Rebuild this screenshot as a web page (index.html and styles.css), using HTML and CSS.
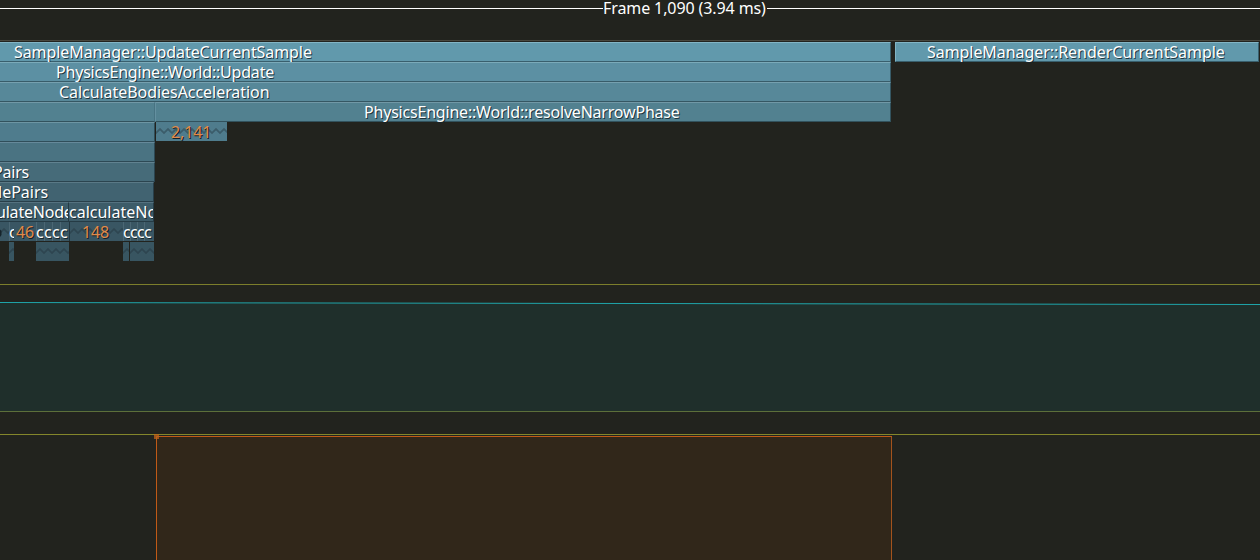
FILE: index.html
```html
<!DOCTYPE html>
<html lang="en">
<head>
<meta charset="utf-8">
<title>Frame timeline</title>
<link rel="stylesheet" href="styles.css">
</head>
<body>
<svg class="defs" aria-hidden="true">
  <defs>
    <pattern id="wave" width="8" height="19" patternUnits="userSpaceOnUse">
      <path d="M-2 9L0 11L4 7L8 11L10 9" fill="none" stroke="#20303a" stroke-opacity=".42" stroke-width="1.8"/>
    </pattern>
  </defs>
</svg>
<main class="timeline">
  <header class="frame"><i class="rule rule-left"></i><span class="frame-label">Frame 1,090 (3.94 ms)</span><i class="rule"></i></header>
  <section class="zones">
    <div class="row d1">
      <div class="zone root"><span class="t t-update">SampleManager::UpdateCurrentSample</span></div>
      <div class="zone render"><span class="t t-render">SampleManager::RenderCurrentSample</span></div>
    </div>
    <div class="row d2"><div class="zone root"><span class="t t-world">PhysicsEngine::World::Update</span></div></div>
    <div class="row d3"><div class="zone root"><span class="t t-bodies">CalculateBodiesAcceleration</span></div></div>
    <div class="row d4"><div class="zone left"></div><div class="zone narrow"><span class="t t-narrow">PhysicsEngine::World::resolveNarrowPhase</span></div></div>
    <div class="row d5"><div class="zone left"></div><div class="fold fold-a"><svg class="zig"><rect width="100%" height="19" fill="url(#wave)"/></svg><span class="count">2,141</span></div></div>
    <div class="row d6"><div class="zone left"></div></div>
    <div class="row d7"><div class="zone left"><span class="t t-pairs">Pairs</span></div></div>
    <div class="row d8"><div class="zone inner"><span class="t t-lepairs">lePairs</span></div></div>
    <div class="row d9"><div class="zone node-a"><span class="t t-node">ulateNode</span></div><div class="zone node-b"><span class="t t-calc">calculateNo</span></div></div>
    <div class="row d10">
      <div class="fold w9"><svg class="zig"><rect width="100%" height="19" fill="url(#wave)"/><path d="M0 7.5V15L1.5 13V9Z" fill="#16242b"/></svg></div>
      <div class="cell w5">c</div>
      <div class="fold w22"><span class="count c46">46</span></div>
      <div class="cell w8">c</div><div class="cell w8">c</div><div class="cell w8">c</div><div class="cell w9">c</div>
      <div class="fold w54"><svg class="zig"><rect width="100%" height="19" fill="url(#wave)"/></svg><span class="count c148">148</span></div>
      <div class="cell w7">c</div><div class="cell w7">c</div><div class="cell w7">c</div><div class="cell w10">c</div>
    </div>
    <div class="row d11">
      <div class="fold leaf-a"><svg class="zig"><rect width="100%" height="19" fill="url(#wave)"/></svg></div>
      <div class="fold leaf-b"><svg class="zig"><rect width="100%" height="19" fill="url(#wave)"/></svg></div>
      <div class="fold leaf-c"><svg class="zig"><rect width="100%" height="19" fill="url(#wave)"/></svg></div>
      <div class="fold leaf-d"><svg class="zig"><rect width="100%" height="19" fill="url(#wave)"/></svg></div>
    </div>
  </section>
  <svg class="plot" width="1260" height="128" viewBox="0 0 1260 128">
    <path d="M0 18.5L1260 20.5V127H0Z" fill="#1f2f2b"/>
    <path d="M0 18.5L1260 20.5" fill="none" stroke="#1fa5aa"/>
    <path d="M0 .5H1260" stroke="#7c7e2b"/>
    <path d="M0 127.5H1260" stroke="#5c6f3a"/>
  </svg>
  <svg class="plot calls" width="1260" height="126" viewBox="0 0 1260 126">
    <path d="M156 2H891V126H156Z" fill="#31271a"/>
    <path d="M0 .5H1260" stroke="#84862b"/>
    <path d="M156.5 126V2.5H892" fill="none" stroke="#c05a17"/>
    <path d="M891.5 3V126" stroke="#a3531d"/>
    <path d="M154 0H159V5H154Z" fill="#c0641b" fill-opacity=".75"/>
  </svg>
</main>
</body>
</html>
```
FILE: styles.css
```css
* { box-sizing: border-box; }
body { margin: 0; background: #22231e; overflow: hidden; font: 16px/20px "Noto Sans", sans-serif; color: #fff; }
.defs { display: block; width: 0; height: 0; }
.timeline { display: flex; flex-direction: column; width: 1260px; height: 560px; overflow: hidden; }
.frame { display: flex; height: 41px; border-bottom: 1px solid #48473e; }
.frame-label { width: 164px; line-height: 17px; white-space: nowrap; letter-spacing: -.1px; }
.rule { flex: 1; height: 1px; margin-top: 8px; background: #fff; }
.rule-left { flex: 0 0 603px; }
.zones { height: 243px; padding-top: 1px; }
.row { display: flex; height: 20px; }
.zone { height: 20px; white-space: nowrap; background: var(--c); border-top: 1px solid var(--hi); border-bottom: 1px solid var(--lo); border-right: 1px solid var(--lo); line-height: 18px; }
.t { display: block; width: max-content; height: 18px; text-shadow: 1px 1px 0 #15242bd9; letter-spacing: -.2px; }
.d1 { --c: #6199ac; --hi: #82b5c5; --lo: #395f6d; }
.d2 { --c: #5c90a3; --hi: #7baab9; --lo: #385c69; }
.d3 { --c: #578899; --hi: #76a0af; --lo: #355763; }
.d4 { --c: #528190; --hi: #7198a6; --lo: #32525d; }
.d5 { --c: #4f7c8d; --hi: #6d95a3; --lo: #304e5a; }
.d6 { --c: #4a7382; --hi: #66899a; --lo: #2d4955; }
.d7 { --c: #466b79; --hi: #618290; --lo: #2b444f; }
.d8 { --c: #416371; --hi: #5a7986; --lo: #283f4a; }
.d9 { --c: #3d5c69; --hi: #557280; --lo: #253b45; }
.d10 { --c: #395663; --hi: #4b6774; --lo: #23363f; }
.d11 { --c: #385561; }
.root { width: 891px; }
.render { width: 364px; margin-left: 4px; border-left: 1px solid var(--hi); }
.left { width: 155px; }
.narrow { width: 736px; border-left: 1px solid #6490a0; }
.d4 .left { border-right-color: #477382; }
.inner { width: 154px; }
.node-a { width: 69px; overflow: hidden; }
.node-b { width: 85px; overflow: hidden; }
.t-update { margin-left: 14px; letter-spacing: -.08px; }
.t-render { margin-left: 31px; letter-spacing: -.06px; }
.t-world { margin-left: 56px; }
.t-bodies { margin-left: 59px; letter-spacing: -.05px; }
.t-narrow { margin-left: 208px; }
.t-pairs { margin-left: -7px; }
.t-lepairs { margin-left: -2px; letter-spacing: 0; }
.t-node { margin-left: -4px; }
.t-calc { letter-spacing: 0; }
.fold { display: grid; height: 19px; background: var(--c); overflow: hidden; flex: none; }
.zig { grid-area: 1 / 1; display: block; width: 100%; height: 19px; }
.count { grid-area: 1 / 1; color: #e08a4a; text-shadow: 1px 1px 0 #142026; padding-left: 15px; letter-spacing: -.1px; }
.fold-a { width: 71px; margin-left: 1px; }
.count.c46 { padding-left: 2px; }
.count.c148 { padding-left: 12px; }
.cell { flex: none; height: 19px; overflow: hidden; background: var(--c); box-shadow: inset 1px 0 var(--hi); text-shadow: 1px 1px 0 #15242b; }
.w5 { width: 5px; } .w7 { width: 7px; } .w8 { width: 8px; } .w9 { width: 9px; } .w10 { width: 10px; }
.w22 { width: 22px; }
.w54 { width: 54px; border-left: 1px solid var(--lo); }
.leaf-a { width: 5px; margin-left: 9px; }
.leaf-b { width: 33px; margin-left: 22px; }
.leaf-c { width: 6px; margin-left: 54px; }
.leaf-d { width: 24px; margin-left: 1px; }
.plot { display: block; flex: none; }
.calls { margin-top: 22px; }
```
